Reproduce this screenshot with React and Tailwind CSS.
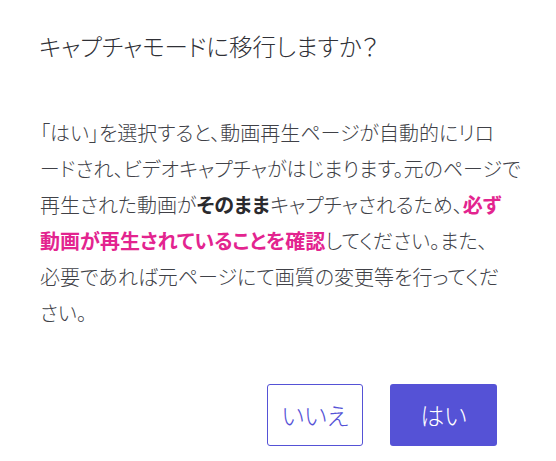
import React from 'react';

const FONT = "font-['Meiryo_UI','Noto_Sans_CJK_JP',sans-serif] [font-feature-settings:'palt']";

export default function App() {
  return (
    <div className={`w-[556px] h-[461px] bg-white flex flex-col ${FONT}`}>
      {/* title */}
      <h1 className="pt-[29px] pl-[39px] text-[23.5px] leading-[34px] font-light text-[#2f3036]">
        キャプチャモードに移行しますか？
      </h1>

      {/* body */}
      <p className="mt-[52px] pl-[40px] text-[20px] leading-[36px] font-light text-[#404147] whitespace-nowrap">
        「はい」を選択すると、動画再生ページが自動的にリロ<br />
        ードされ、ビデオキャプチャがはじまります。元のページで<br />
        再生された動画が<span className="font-bold text-[#2a2a2e]">そのまま</span>キャプチャされるため、<span className="font-bold text-[#e3248f]">必ず</span><br />
        <span className="font-bold text-[#e3248f]">動画が再生されていることを確認</span>してください。また、<br />
        必要であれば元ページにて画質の変更等を行ってくだ<br />
        さい。
      </p>

      {/* actions */}
      <div className="mt-auto mb-[15px] mr-[59px] flex justify-end gap-[27px]">
        <button className="w-[96px] h-[62px] rounded-[3px] border border-[#5552d6] bg-white text-[24px] font-light text-[#5552d6]">
          いいえ
        </button>
        <button className="w-[107px] h-[62px] rounded-[3px] bg-[#5552d6] text-[24px] font-light text-white">
          はい
        </button>
      </div>
    </div>
  );
}
